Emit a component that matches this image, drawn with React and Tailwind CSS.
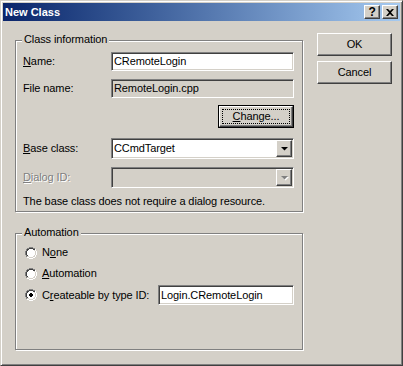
const sunken =
  'border border-t-[#808080] border-l-[#808080] border-b-white border-r-white shadow-[inset_1px_1px_0_#404040,inset_-1px_-1px_0_#d4d0c8]'
const raised =
  'border border-t-white border-l-white border-b-[#404040] border-r-[#404040] shadow-[inset_-1px_-1px_0_#808080,inset_1px_1px_0_#d4d0c8]'

// classic 12x12 radio, one char per pixel
const RADIO = [
  '....GGGG....',
  '..GGKKKKGG..',
  '.GKKWWWWKKH.',
  '.GKWWWWWWLH.',
  'GKWWWWWWWWLH',
  'GKWWWWWWWWLH',
  'GKWWWWWWWWLH',
  'GKWWWWWWWWLH',
  '.GKWWWWWWLH.',
  '.GLLWWWWLLH.',
  '..HHLLLLHH..',
  '....HHHH....',
]
const DOT = ['.XX.', 'XXXX', 'XXXX', '.XX.']
const COLORS = { G: '#808080', K: '#404040', W: '#fff', L: '#d4d0c8', H: '#fff', X: '#000' }

function TitleButton({ children }) {
  return (
    <div className={`${raised} w-[16px] h-[14px] bg-[#d4d0c8] flex items-center justify-center`}>
      {children}
    </div>
  )
}

function GroupBox({ title, className, children }) {
  return (
    <div className={`relative border border-[#808080] shadow-[inset_1px_1px_0_#fff,1px_1px_0_#fff] ${className}`}>
      {/* caption sits over the etched line */}
      <span className="absolute left-[6px] -top-[8px] bg-[#d4d0c8] px-[2px] leading-[13px]">{title}</span>
      {children}
    </div>
  )
}

function Edit({ value, grey, className }) {
  return (
    <div
      className={`${sunken} h-[19px] flex items-center pl-[2px] leading-[13px] ${grey ? 'bg-[#d4d0c8]' : 'bg-white'} ${className}`}
    >
      {value}
    </div>
  )
}

function Arrow({ disabled }) {
  return (
    <svg width="7" height="4" viewBox="0 0 7 4" className="overflow-visible">
      {disabled && <path d="M1 1h7L4.5 4.5z" fill="#fff" />}
      <path d="M0 0h7L3.5 3.5z" fill={disabled ? '#808080' : '#000'} />
    </svg>
  )
}

function Combo({ value, disabled }) {
  return (
    <div
      className={`${sunken} w-[183px] h-[21px] flex items-center pl-[2px] pr-[1px] ${disabled ? 'bg-[#d4d0c8]' : 'bg-white'}`}
    >
      <span className="flex-1 leading-[13px]">{value}</span>
      <div className={`${raised} w-[16px] h-[17px] bg-[#d4d0c8] flex items-center justify-center`}>
        <Arrow disabled={disabled} />
      </div>
    </div>
  )
}

function Radio({ checked, children }) {
  const pixels = []
  RADIO.forEach((row, y) =>
    [...row].forEach((c, x) => {
      if (c !== '.') pixels.push(<rect key={`r${x}-${y}`} x={x} y={y} width="1" height="1" fill={COLORS[c]} />)
    })
  )
  if (checked)
    DOT.forEach((row, y) =>
      [...row].forEach((c, x) => {
        if (c !== '.') pixels.push(<rect key={`d${x}-${y}`} x={x + 4} y={y + 4} width="1" height="1" fill="#000" />)
      })
    )
  return (
    <div className="flex items-center">
      <svg width="12" height="12" viewBox="0 0 12 12" className="ml-[9px]" shapeRendering="crispEdges">
        {pixels}
      </svg>
      <span className="ml-[5px] leading-[13px]">{children}</span>
    </div>
  )
}

export default function App() {
  return (
    <div className="w-[403px] h-[366px] bg-[#d4d0c8] font-['Liberation_Sans',Arial,sans-serif] text-[11px] tracking-[-0.1px] text-black border border-t-[#d4d0c8] border-l-[#d4d0c8] border-b-[#404040] border-r-[#404040] shadow-[inset_1px_1px_0_#fff,inset_-1px_-1px_0_#808080] p-[2px] flex flex-col">
      {/* Title bar */}
      <div className="h-[18px] bg-linear-to-r from-[#0a246a] to-[#a6caf0] flex items-center pl-[2px] pr-[2px]">
        <span className="flex-1 text-white font-bold leading-[13px] tracking-normal">New Class</span>
        <div className="flex gap-[2px]">
          <TitleButton>
            <span className="font-bold text-[12px] leading-none">?</span>
          </TitleButton>
          <TitleButton>
            <svg width="8" height="7" viewBox="0 0 8 7">
              <path d="M0 0h2l2 2 2-2h2L5 3.5 8 7H6L4 5 2 7H0l3-3.5z" fill="#000" />
            </svg>
          </TitleButton>
        </div>
      </div>

      {/* Body */}
      <div className="flex pl-[12px]">
        <div className="flex flex-col w-[288px]">
          <GroupBox title="Class information" className="mt-[19px] h-[172px] flex flex-col pr-[8px]">
            <div className="mt-[11px] flex items-center">
              <span className="w-[95px] pl-[7px]">
                <u>N</u>ame:
              </span>
              <Edit value="CRemoteLogin" className="w-[183px]" />
            </div>
            <div className="mt-[8px] flex items-center">
              <span className="w-[95px] pl-[7px]">File name:</span>
              <Edit value="RemoteLogin.cpp" grey className="w-[183px]" />
            </div>
            <div className="mt-[7px] flex justify-end">
              <div className="w-[76px] h-[23px] border border-black">
                <div className={`${raised} h-full p-[2px]`}>
                  <div className="h-full border border-dotted border-black flex items-center justify-center leading-[13px]">
                    <span>
                      <u>C</u>hange...
                    </span>
                  </div>
                </div>
              </div>
            </div>
            <div className="mt-[10px] flex items-center">
              <span className="w-[95px] pl-[7px]">
                <u>B</u>ase class:
              </span>
              <Combo value="CCmdTarget" />
            </div>
            <div className="mt-[8px] flex items-center">
              <span className="w-[95px] pl-[7px] text-[#808080] [text-shadow:1px_1px_0_#fff]">
                <u>D</u>ialog ID:
              </span>
              <Combo disabled />
            </div>
            <div className="mt-[7px] pl-[7px] leading-[13px]">The base class does not require a dialog resource.</div>
          </GroupBox>

          <GroupBox title="Automation" className="mt-[21px] h-[117px] flex flex-col pr-[8px]">
            <div className="mt-[12px]">
              <Radio>
                N<u>o</u>ne
              </Radio>
            </div>
            <div className="mt-[8px]">
              <Radio>
                <u>A</u>utomation
              </Radio>
            </div>
            <div className="mt-[5px] flex items-center">
              <Radio checked>
                C<u>r</u>eateable by type ID:
              </Radio>
              <Edit value="Login.CRemoteLogin" className="ml-auto w-[136px] h-[20px]" />
            </div>
          </GroupBox>
        </div>

        {/* Buttons */}
        <div className="ml-[14px] mt-[12px] flex flex-col gap-[5px]">
          <div className={`${raised} w-[75px] h-[23px] flex items-center justify-center leading-[13px]`}>OK</div>
          <div className={`${raised} w-[75px] h-[23px] flex items-center justify-center leading-[13px]`}>Cancel</div>
        </div>
      </div>
    </div>
  )
}
